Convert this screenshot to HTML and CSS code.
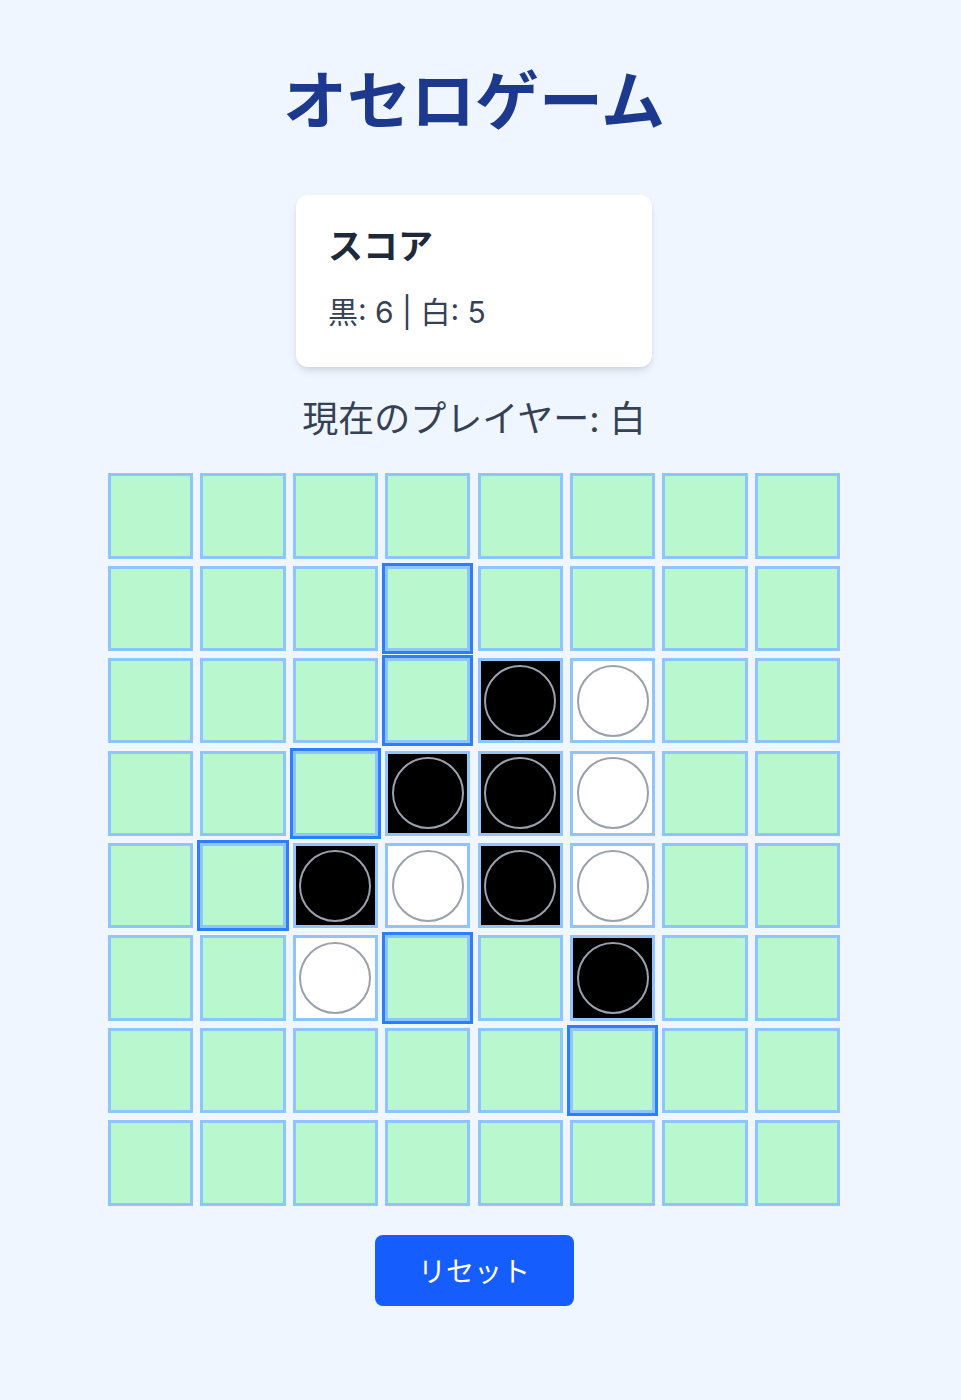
FILE: index.html
```html
<!DOCTYPE html>
<html lang="ja">
<head>
    <meta charset="UTF-8">
    <meta name="viewport" content="width=device-width, initial-scale=1.0">
    <title>オセロゲーム</title>
    <link rel="stylesheet" href="styles.css">
</head>
<body>

    <div class="app">
        <h1>オセロゲーム</h1>

        <div class="score-card">
            <h2>スコア</h2>
            <p id="score">黒: 6 | 白: 5</p>
        </div>

        <div class="turn" id="turn">現在のプレイヤー: 白</div>

        <div class="board" id="board"></div>

        <button class="reset-btn" id="reset">リセット</button>
    </div>

    <script>
        document.addEventListener('DOMContentLoaded', function() {
            const boardEl = document.getElementById('board');
            const scoreEl = document.getElementById('score');
            const turnEl = document.getElementById('turn');
            const resetBtn = document.getElementById('reset');

            const dirs = [[-1,-1],[-1,0],[-1,1],[0,-1],[0,1],[1,-1],[1,0],[1,1]];

            // 0 = empty, 1 = black, 2 = white
            let board = [
                [0,0,0,0,0,0,0,0],
                [0,0,0,0,0,0,0,0],
                [0,0,0,0,1,2,0,0],
                [0,0,0,1,1,2,0,0],
                [0,0,1,2,1,2,0,0],
                [0,0,2,0,0,1,0,0],
                [0,0,0,0,0,0,0,0],
                [0,0,0,0,0,0,0,0]
            ];
            let player = 2;

            function flips(r, c, who) {
                if (board[r][c] !== 0) return [];
                const other = who === 1 ? 2 : 1;
                let result = [];
                dirs.forEach(([dr, dc]) => {
                    let line = [];
                    let y = r + dr, x = c + dc;
                    while (y >= 0 && y < 8 && x >= 0 && x < 8 && board[y][x] === other) {
                        line.push([y, x]);
                        y += dr;
                        x += dc;
                    }
                    if (line.length && y >= 0 && y < 8 && x >= 0 && x < 8 && board[y][x] === who) {
                        result = result.concat(line);
                    }
                });
                return result;
            }

            function render() {
                boardEl.innerHTML = '';
                let black = 0, white = 0;
                for (let r = 0; r < 8; r++) {
                    for (let c = 0; c < 8; c++) {
                        const cell = document.createElement('div');
                        cell.className = 'cell';
                        const v = board[r][c];
                        if (v === 1) {
                            black++;
                            cell.classList.add('black');
                            cell.innerHTML = '<span class="disc"></span>';
                        } else if (v === 2) {
                            white++;
                            cell.classList.add('white');
                            cell.innerHTML = '<span class="disc"></span>';
                        } else if (flips(r, c, player).length) {
                            cell.classList.add('hint');
                        }
                        cell.addEventListener('click', () => play(r, c));
                        boardEl.appendChild(cell);
                    }
                }
                scoreEl.textContent = `黒: ${black} | 白: ${white}`;
                turnEl.textContent = `現在のプレイヤー: ${player === 1 ? '黒' : '白'}`;
            }

            function play(r, c) {
                const f = flips(r, c, player);
                if (!f.length) return;
                board[r][c] = player;
                f.forEach(([y, x]) => { board[y][x] = player; });
                player = player === 1 ? 2 : 1;
                render();
            }

            resetBtn.addEventListener('click', () => {
                board = board.map(row => row.map(() => 0));
                board[3][3] = 2; board[4][4] = 2;
                board[3][4] = 1; board[4][3] = 1;
                player = 1;
                render();
            });

            render();
        });
    </script>

</body>
</html>
```

FILE: styles.css
```css
* {
    box-sizing: border-box;
}

html, body {
    margin: 0;
    padding: 0;
    background-color: #eff6ff;
    font-family: Inter, "Noto Sans CJK JP", sans-serif;
}

.app {
    display: flex;
    flex-direction: column;
    align-items: center;
    padding: 63px 13px 60px 0;
}

h1 {
    margin: 0;
    font-size: 64px;
    line-height: 1.2;
    font-weight: 700;
    color: #1c398e;
}

.score-card {
    width: 356px;
    margin-top: 55px;
    padding: 29px 32px 32px;
    background-color: #fff;
    border-radius: 12px;
    box-shadow: 0 5px 8px -1px rgba(0, 0, 0, 0.1), 0 2px 5px -2px rgba(0, 0, 0, 0.1);
}

.score-card h2 {
    margin: 0 0 21px;
    font-size: 35px;
    line-height: 1.3;
    font-weight: 700;
    color: #1e2939;
}

.score-card p {
    margin: 0;
    font-size: 30px;
    line-height: 1.5;
    color: #364153;
}

.turn {
    margin-top: 25px;
    font-size: 36px;
    line-height: 1.5;
    color: #364153;
}

.board {
    display: grid;
    grid-template-columns: repeat(8, 85.33px);
    grid-auto-rows: 85.33px;
    gap: 7.1px;
    margin-top: 27px;
}

.cell {
    display: flex;
    align-items: center;
    justify-content: center;
    border: 3px solid #8ec5ff;
    background-color: #b9f8cf;
    cursor: pointer;
}

.cell.hint {
    box-shadow: 0 0 0 3px #2b7fff;
}

.cell.black {
    background-color: #000;
}

.cell.white {
    background-color: #fff;
}

.disc {
    width: 72px;
    height: 72px;
    border-radius: 50%;
    border: 2px solid #99a1af;
}

.black .disc {
    background-color: #000;
}

.white .disc {
    background-color: #fff;
}

.reset-btn {
    width: 199px;
    height: 71px;
    margin-top: 29px;
    border: none;
    border-radius: 8px;
    background-color: #155dfc;
    color: #fff;
    font-family: inherit;
    font-size: 28px;
    cursor: pointer;
}

.reset-btn:hover {
    background-color: #1447e6;
}
```
